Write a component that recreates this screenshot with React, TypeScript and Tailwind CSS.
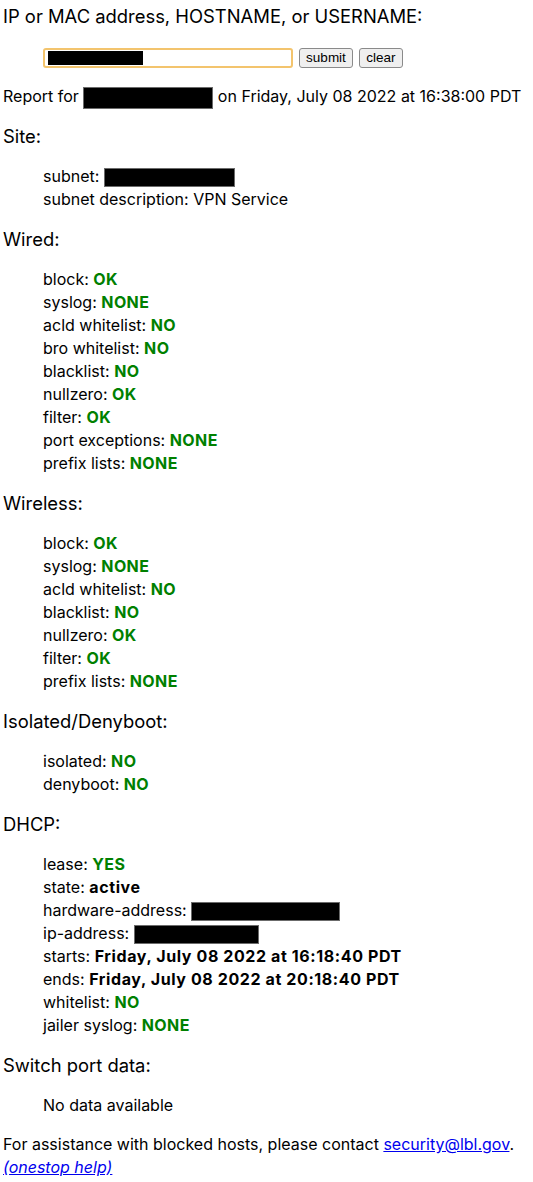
import React from "react";

type Item = { label: string; value?: string; kind?: "ok" | "bold" | "redact"; w?: number };

function Redact({ w, h }: { w: number; h: number }) {
  return (
    <span
      className="inline-block bg-black border border-[#6b6b6b] align-middle"
      style={{ width: w, height: h }}
    />
  );
}

function Row({ it }: { it: Item }) {
  return (
    <div className="h-[23px] leading-[23px] whitespace-nowrap">
      {it.label}:{" "}
      {it.kind === "ok" && <span className="font-bold text-[#008000] tracking-[0.4px]">{it.value}</span>}
      {it.kind === "bold" && <span className="font-bold tracking-[0.6px]">{it.value}</span>}
      {it.kind === "redact" && <Redact w={it.w || 100} h={19} />}
      {!it.kind && it.value}
    </div>
  );
}

function Section({ title, items }: { title: string; items: Item[] }) {
  return (
    <>
      <div className="text-[18.4px] leading-[25px] mt-4">{title}</div>
      <div className="ml-10 my-4">
        {items.map((it, i) => (
          <Row key={i} it={it} />
        ))}
      </div>
    </>
  );
}

const ok = (label: string, value: string): Item => ({ label, value, kind: "ok" });

export default function App() {
  return (
    <div
      className="min-h-[1182px] bg-white text-black pl-[3px] pt-1 text-[16px] leading-[23px]"
      style={{ fontFamily: "Inter, sans-serif" }}
    >
      <div className="text-[18.4px] leading-[25px]">IP or MAC address, HOSTNAME, or USERNAME:</div>

      <div className="ml-10 mt-[18px] mb-[17px] flex items-center h-[21px]">
        <div className="w-[250px] h-[20px] border-2 border-[#f3c46d] rounded-[3px] flex items-center pl-[3px] bg-white">
          <span className="inline-block w-[95px] h-[14px] bg-black" />
        </div>
        <button
          className="ml-[6px] w-[54px] h-[20px] bg-[#efefef] border border-[#8a8a8a] rounded-[3px] text-[13.5px] leading-[18px] text-black"
          style={{ fontFamily: "'Liberation Sans', Arial, sans-serif" }}
        >
          submit
        </button>
        <button
          className="ml-[6px] w-[44px] h-[20px] bg-[#efefef] border border-[#8a8a8a] rounded-[3px] text-[13.5px] leading-[18px] text-black"
          style={{ fontFamily: "'Liberation Sans', Arial, sans-serif" }}
        >
          clear
        </button>
      </div>

      <div className="h-[23px] leading-[23px] whitespace-nowrap">
        Report for <Redact w={130} h={22} /> on Friday, July 08 2022 at 16:38:00 PDT
      </div>

      <Section
        title="Site:"
        items={[
          { label: "subnet", kind: "redact", w: 131 },
          { label: "subnet description", value: "VPN Service" },
        ]}
      />

      <Section
        title="Wired:"
        items={[
          ok("block", "OK"),
          ok("syslog", "NONE"),
          ok("acld whitelist", "NO"),
          ok("bro whitelist", "NO"),
          ok("blacklist", "NO"),
          ok("nullzero", "OK"),
          ok("filter", "OK"),
          ok("port exceptions", "NONE"),
          ok("prefix lists", "NONE"),
        ]}
      />

      <Section
        title="Wireless:"
        items={[
          ok("block", "OK"),
          ok("syslog", "NONE"),
          ok("acld whitelist", "NO"),
          ok("blacklist", "NO"),
          ok("nullzero", "OK"),
          ok("filter", "OK"),
          ok("prefix lists", "NONE"),
        ]}
      />

      <Section title="Isolated/Denyboot:" items={[ok("isolated", "NO"), ok("denyboot", "NO")]} />

      <Section
        title="DHCP:"
        items={[
          ok("lease", "YES"),
          { label: "state", value: "active", kind: "bold" },
          { label: "hardware-address", kind: "redact", w: 149 },
          { label: "ip-address", kind: "redact", w: 125 },
          { label: "starts", value: "Friday, July 08 2022 at 16:18:40 PDT", kind: "bold" },
          { label: "ends", value: "Friday, July 08 2022 at 20:18:40 PDT", kind: "bold" },
          ok("whitelist", "NO"),
          ok("jailer syslog", "NONE"),
        ]}
      />

      <div className="text-[18.4px] leading-[25px] mt-4">Switch port data:</div>
      <div className="ml-10 my-4 h-[23px] leading-[23px]">No data available</div>

      <div className="leading-[23px]">
        For assistance with blocked hosts, please contact{" "}
        <a href="#" className="text-[#0000ee] underline">
          security@lbl.gov
        </a>
        .
        <br />
        <a href="#" className="text-[#0000ee] underline italic">
          (onestop help)
        </a>
      </div>
    </div>
  );
}
